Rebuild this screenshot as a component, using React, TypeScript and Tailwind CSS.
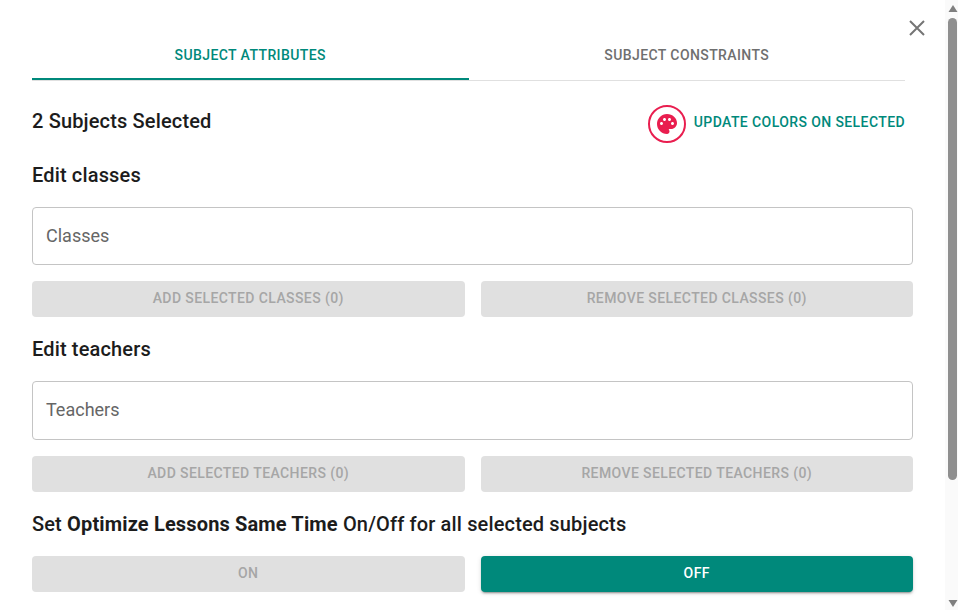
import React from "react";

const font = { fontFamily: "Roboto, sans-serif" };

function Btn({ children, active }: { children: React.ReactNode; active?: boolean }) {
  return (
    <button
      className={
        active
          ? "h-9 flex-1 rounded bg-[#00897b] pb-[2px] text-sm font-medium tracking-[0.4px] text-white shadow-[0_3px_1px_-2px_rgba(0,0,0,0.2),0_2px_2px_0_rgba(0,0,0,0.14),0_1px_5px_0_rgba(0,0,0,0.12)]"
          : "h-9 flex-1 rounded bg-[#e0e0e0] pb-[2px] text-sm font-medium tracking-[0.4px] text-[#a6a6a6]"
      }
    >
      {children}
    </button>
  );
}

function Field({ label, tall }: { label: string; tall?: boolean }) {
  return (
    <div
      className={
        tall
          ? "flex h-[59px] items-center rounded border border-[#c4c4c4] px-[13px] pb-[2px] text-[#666666]"
          : "flex h-[58px] items-center rounded border border-[#c4c4c4] px-[13px] pb-[2px] text-[#666666]"
      }
    >
      <span className="text-[18px]">{label}</span>
    </div>
  );
}

export default function App() {
  return (
    <div className="flex h-[610px] w-[958px] overflow-hidden bg-white text-[#1c1c1c]" style={font}>
      <main className="relative w-[945px] pl-8 pr-8">
        <button className="absolute right-[19px] top-[19px] text-[#757575]" aria-label="Close">
          <svg width="18" height="18" viewBox="0 0 18 18" fill="none" stroke="currentColor" strokeWidth="2">
            <path d="M2 2 L16 16 M16 2 L2 16" />
          </svg>
        </button>

        <div className="mt-8 flex h-[49px] w-[873px] border-b border-[#e0e0e0] text-sm font-medium tracking-[0.4px]">
          <div className="flex h-12 flex-1 items-center justify-center border-b-2 border-[#00897b] text-[#00897b]">
            SUBJECT ATTRIBUTES
          </div>
          <div className="flex h-12 flex-1 items-center justify-center pb-[2px] text-[#6f6f6f]">SUBJECT CONSTRAINTS</div>
        </div>

        <div className="mt-[24px] flex h-[38px] w-[873px] items-center justify-between">
          <h2 className="pb-[6px] text-xl font-medium tracking-[0.15px]">2 Subjects Selected</h2>
          <div className="flex items-center gap-2 text-sm font-medium tracking-[0.4px] text-[#00897b]">
            <span className="flex h-[38px] w-[38px] items-center justify-center rounded-full border-2 border-[#e91e4f]">
              <svg width="24" height="24" viewBox="0 0 24 24" fill="#e91e4f">
                <path d="M12 2C6.49 2 2 6.49 2 12s4.49 10 10 10c1.38 0 2.5-1.12 2.5-2.5 0-.61-.23-1.2-.64-1.67-.08-.1-.13-.21-.13-.33 0-.28.22-.5.5-.5H16c3.31 0 6-2.69 6-6 0-4.96-4.49-9-10-9zm-5.5 11c-.83 0-1.5-.67-1.5-1.5S5.67 10 6.5 10s1.5.67 1.5 1.5S7.33 13 6.5 13zm3-4C8.67 9 8 8.33 8 7.5S8.67 6 9.5 6s1.5.67 1.5 1.5S10.33 9 9.5 9zm5 0c-.83 0-1.5-.67-1.5-1.5S13.67 6 14.5 6s1.5.67 1.5 1.5S15.33 9 14.5 9zm3 4c-.83 0-1.5-.67-1.5-1.5s.67-1.5 1.5-1.5 1.5.67 1.5 1.5-.67 1.5-1.5 1.5z" />
              </svg>
            </span>
            <span className="pb-[4px]">UPDATE COLORS ON SELECTED</span>
          </div>
        </div>

        <h2 className="mt-[18px] text-xl leading-[28px] font-medium tracking-[0.15px]">Edit classes</h2>
        <div className="mt-[18px]">
          <Field label="Classes" />
        </div>
        <div className="mt-4 flex gap-4">
          <Btn>ADD SELECTED CLASSES (0)</Btn>
          <Btn>REMOVE SELECTED CLASSES (0)</Btn>
        </div>

        <h2 className="mt-[18px] text-xl leading-[28px] font-medium tracking-[0.15px]">Edit teachers</h2>
        <div className="mt-[18px]">
          <Field label="Teachers" tall />
        </div>
        <div className="mt-4 flex gap-4">
          <Btn>ADD SELECTED TEACHERS (0)</Btn>
          <Btn>REMOVE SELECTED TEACHERS (0)</Btn>
        </div>

        <h2 className="mt-[18px] text-xl leading-[28px] font-medium tracking-[0.15px]">
          Set <b className="font-bold">Optimize Lessons Same Time</b> On/Off for all selected subjects
        </h2>
        <div className="mt-[18px] flex gap-4">
          <Btn>ON</Btn>
          <Btn active>OFF</Btn>
        </div>
      </main>

      <aside className="flex w-[13px] flex-col items-center bg-[#fafafa] pl-[2px]">
        <svg width="10" height="18" viewBox="0 0 10 18" fill="#7f7f7f" className="shrink-0">
          <path d="M5 5 L9.5 12 H0.5 Z" />
        </svg>
        <div className="h-[462px] w-[9px] rounded-full bg-[#8f8f8f]" />
        <div className="flex-1" />
        <svg width="10" height="12" viewBox="0 0 10 12" fill="#7f7f7f" className="shrink-0">
          <path d="M0.5 2 H9.5 L5 9 Z" />
        </svg>
      </aside>
    </div>
  );
}
